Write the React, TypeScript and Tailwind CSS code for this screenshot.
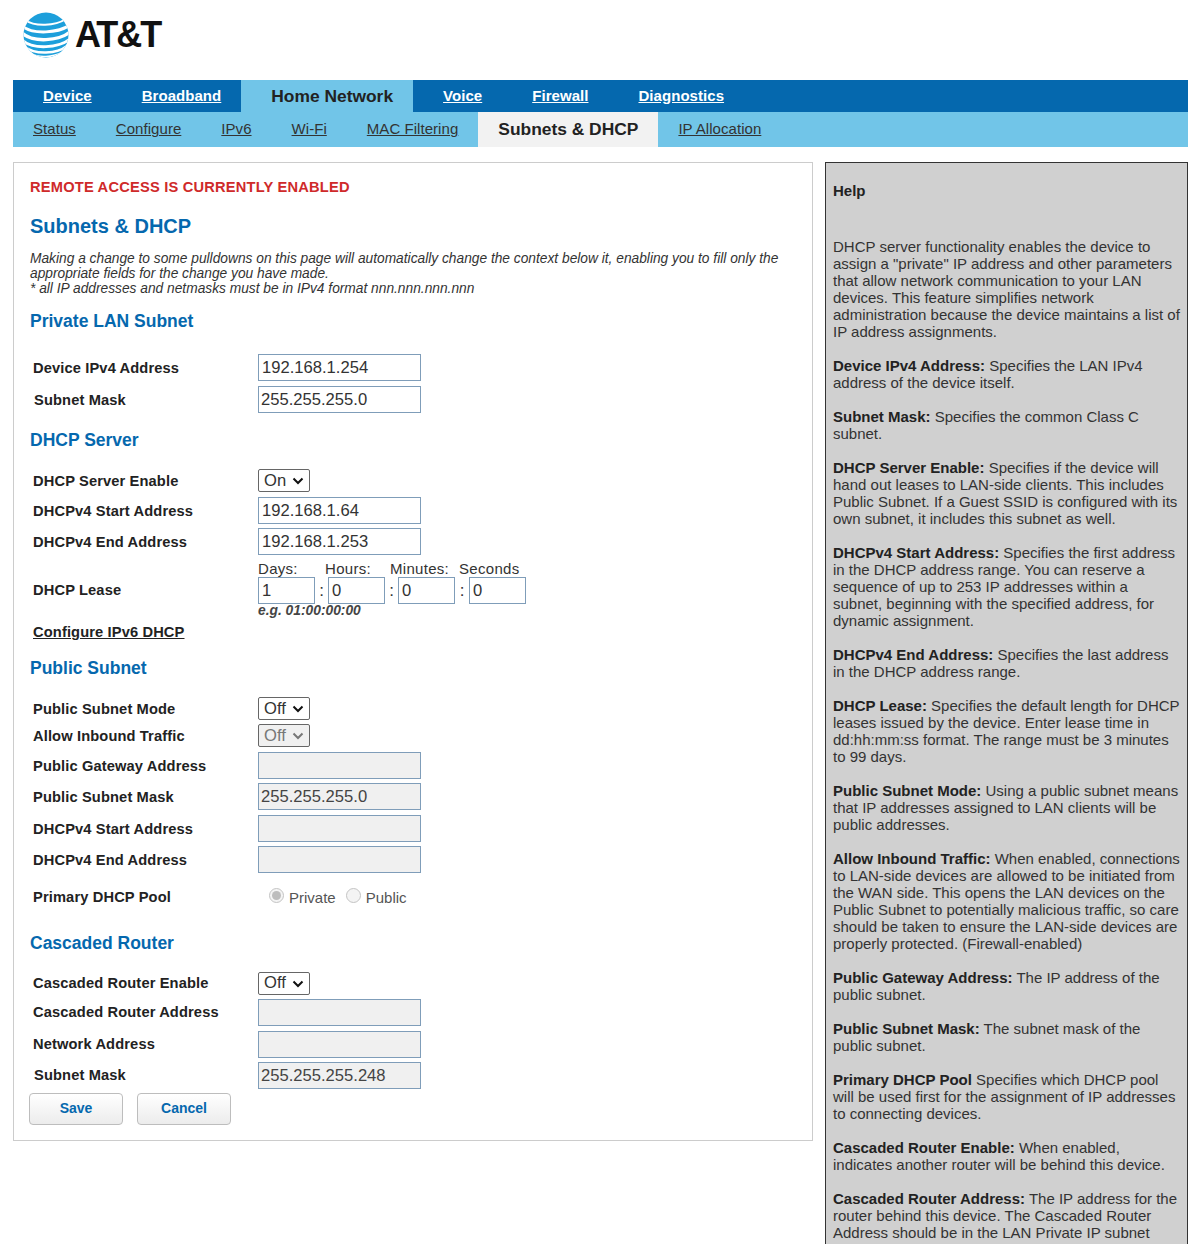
import { ReactNode } from 'react';

const font = 'font-["Liberation_Sans",Arial,sans-serif]';

const topTabs = [
  { label: 'Device' },
  { label: 'Broadband' },
  { label: 'Home Network', active: true },
  { label: 'Voice' },
  { label: 'Firewall' },
  { label: 'Diagnostics' },
];

const subTabs = [
  { label: 'Status' },
  { label: 'Configure' },
  { label: 'IPv6' },
  { label: 'Wi-Fi' },
  { label: 'MAC Filtering' },
  { label: 'Subnets & DHCP', active: true },
  { label: 'IP Allocation' },
];

const helpItems: { term?: string; text: string }[] = [
  { term: 'Device IPv4 Address:', text: 'Specifies the LAN IPv4 address of the device itself.' },
  { term: 'Subnet Mask:', text: 'Specifies the common Class C subnet.' },
  { term: 'DHCP Server Enable:', text: 'Specifies if the device will hand out leases to LAN-side clients. This includes Public Subnet. If a Guest SSID is configured with its own subnet, it includes this subnet as well.' },
  { term: 'DHCPv4 Start Address:', text: 'Specifies the first address in the DHCP address range. You can reserve a sequence of up to 253 IP addresses within a subnet, beginning with the specified address, for dynamic assignment.' },
  { term: 'DHCPv4 End Address:', text: 'Specifies the last address in the DHCP address range.' },
  { term: 'DHCP Lease:', text: 'Specifies the default length for DHCP leases issued by the device. Enter lease time in dd:hh:mm:ss format. The range must be 3 minutes to 99 days.' },
  { term: 'Public Subnet Mode:', text: 'Using a public subnet means that IP addresses assigned to LAN clients will be public addresses.' },
  { term: 'Allow Inbound Traffic:', text: 'When enabled, connections to LAN-side devices are allowed to be initiated from the WAN side. This opens the LAN devices on the Public Subnet to potentially malicious traffic, so care should be taken to ensure the LAN-side devices are properly protected. (Firewall-enabled)' },
  { term: 'Public Gateway Address:', text: 'The IP address of the public subnet.' },
  { term: 'Public Subnet Mask:', text: 'The subnet mask of the public subnet.' },
  { term: 'Primary DHCP Pool', text: 'Specifies which DHCP pool will be used first for the assignment of IP addresses to connecting devices.' },
  { term: 'Cascaded Router Enable:', text: 'When enabled, indicates another router will be behind this device.' },
  { term: 'Cascaded Router Address:', text: 'The IP address for the router behind this device. The Cascaded Router Address should be in the LAN Private IP subnet range.' },
];

const Globe = () => (
  <svg width="46" height="46" viewBox="0 0 46 46">
    <defs>
      <clipPath id="globe">
        <circle cx="23" cy="23" r="22.5" />
      </clipPath>
    </defs>
    <g clipPath="url(#globe)">
      <rect width="46" height="46" fill="#1d9fdb" />
      <g fill="none" stroke="#fff">
        <path d="M2 8C12 15 32 14 43 7" strokeWidth="2" />
        <path d="M-1 14C10 23 36 21 47 13" strokeWidth="3" />
        <path d="M-1 21C10 31 36 29 47 20" strokeWidth="3.4" />
        <path d="M-1 28C10 38 36 36 47 27" strokeWidth="3" />
        <path d="M2 35C12 43 34 42 44 34" strokeWidth="2.4" />
        <path d="M8 42C16 46 30 45 38 41" strokeWidth="1.4" />
      </g>
    </g>
  </svg>
);

const Chevron = ({ muted }: { muted?: boolean }) => (
  <svg width="12" height="8" viewBox="0 0 12 8" className="ml-1.5" fill="none">
    <path d="M1.5 1.5 6 6l4.5-4.5" stroke={muted ? '#777' : '#111'} strokeWidth="2" />
  </svg>
);

const Section = ({ children, className }: { children: ReactNode; className: string }) => (
  <h2 className={`text-[17.5px] leading-[22px] font-bold text-[#0568ae] ${className}`}>{children}</h2>
);

const Label = ({ children, nudge }: { children: ReactNode; nudge?: boolean }) => (
  <div className={`w-[228px] shrink-0 text-[14.67px] leading-[18px] font-bold text-[#222] tracking-[0.13px] ${nudge ? 'pl-[4px]' : 'pl-[3px]'}`}>
    {children}
  </div>
);

const Input = ({ value, disabled, tight, w = 'w-[163px]' }: { value?: string; disabled?: boolean; tight?: boolean; w?: string }) => (
  <div
    className={`${w} h-[27px] border border-[#7f9db9] text-[16.6px] leading-[25px] ${tight ? 'pl-[2px]' : 'pl-[3px]'} ${disabled ? 'bg-[#f0f0f0] text-[#444]' : 'bg-white text-[#333]'}`}
  >
    {value}
  </div>
);

const Select = ({ value, disabled }: { value: string; disabled?: boolean }) => (
  <div
    className={`w-[52px] h-[23px] flex items-center pl-[5px] pt-[1px] rounded-[2px] border text-[16.6px] ${disabled ? 'border-[#666] bg-[#f0f0f0] text-[#777]' : 'border-[#666] bg-white text-[#333]'}`}
  >
    {value}
    <Chevron muted={disabled} />
  </div>
);

const Radio = ({ checked }: { checked?: boolean }) => (
  <span className="w-[15px] h-[15px] -mt-[4px] rounded-full border border-[#c4c4c4] bg-[#f4f4f4] flex items-center justify-center">
    {checked && <span className="w-[9px] h-[9px] rounded-full bg-[#bdbdbd]" />}
  </span>
);

const Row = ({ label, nudge, children, className }: { label: ReactNode; nudge?: boolean; children: ReactNode; className: string }) => (
  <div className={`flex items-center ${className}`}>
    <Label nudge={nudge}>{label}</Label>
    {children}
  </div>
);

const Colon = ({ w = 'w-[13px]' }: { w?: string }) => <span className={`${w} text-center text-[17px] leading-[27px] text-[#333]`}>:</span>;

const Button = ({ children }: { children: ReactNode }) => (
  <div className="w-[94px] h-[32px] flex items-center justify-center rounded-[4px] border border-[#bdbdbd] bg-gradient-to-b from-white to-[#ececec] text-[14px] font-bold text-[#0568ae]">
    {children}
  </div>
);

export default function App() {
  return (
    <div className={`${font} h-[1244px] overflow-hidden bg-white pl-[13px] pr-[1px] text-[#333]`}>
      <header className="h-[80px] flex items-start pt-[12px] pl-[10px]">
        <Globe />
        <span className="ml-[6px] mt-[3px] text-[36px] leading-[40px] font-bold tracking-[-2px] text-[#111]">AT&amp;T</span>
      </header>

      <nav className="h-[32px] flex bg-[#0568ae]">
        {topTabs.map((t) =>
          t.active ? (
            <div key={t.label} className="pl-[30px] pr-[20px] flex items-center bg-[#71c5e8] text-[17.4px] font-bold text-[#222]">
              {t.label}
            </div>
          ) : (
            <a key={t.label} className="pl-[30px] pr-[20px] flex items-center text-[15px] font-bold tracking-[0.05px] text-white underline">
              {t.label}
            </a>
          ),
        )}
      </nav>
      <nav className="h-[35px] flex bg-[#71c5e8]">
        {subTabs.map((t) =>
          t.active ? (
            <div key={t.label} className="px-5 flex items-center bg-[#f2f2f2] text-[17.4px] font-bold text-[#222]">
              {t.label}
            </div>
          ) : (
            <a key={t.label} className="px-5 flex items-center text-[15px] tracking-[0.05px] text-[#333] underline">
              {t.label}
            </a>
          ),
        )}
      </nav>

      <div className="mt-[15px] flex items-start gap-[12px]">
        <main className="w-[800px] h-[979px] shrink-0 border border-[#cccccc] pl-[16px] pt-[15px]">
          <p className="text-[14.67px] leading-[18px] font-bold text-[#cf2a2a] tracking-[0.2px]">REMOTE ACCESS IS CURRENTLY ENABLED</p>
          <h1 className="mt-[18px] text-[20px] leading-[24px] font-bold text-[#0568ae]">Subnets &amp; DHCP</h1>
          <p className="mt-[13px] w-[760px] text-[13.75px] leading-[15px] italic text-[#333]">
            Making a change to some pulldowns on this page will automatically change the context below it, enabling you to fill only the appropriate fields for the change you have made.
            <br />* all IP addresses and netmasks must be in IPv4 format nnn.nnn.nnn.nnn
          </p>

          <Section className="mt-[14px]">Private LAN Subnet</Section>
          <Row label="Device IPv4 Address" className="mt-[22px]"><Input value="192.168.1.254" /></Row>
          <Row label="Subnet Mask" nudge className="mt-[5px]"><Input value="255.255.255.0" tight /></Row>

          <Section className="mt-[16px]">DHCP Server</Section>
          <Row label="DHCP Server Enable" className="mt-[18px]"><Select value="On" /></Row>
          <Row label="DHCPv4 Start Address" className="mt-[5px]"><Input value="192.168.1.64" /></Row>
          <Row label="DHCPv4 End Address" className="mt-[4px]"><Input value="192.168.1.253" /></Row>
          <div className="flex">
            <div className="w-[228px] shrink-0 pt-[26px]"><Label>DHCP Lease</Label></div>
            <div>
              <div className="mt-[6px] h-[16px] flex text-[15px] leading-[16px] tracking-[0.3px] text-[#333]">
                <span className="w-[67px]">Days:</span>
                <span className="w-[65px]">Hours:</span>
                <span className="w-[69px]">Minutes:</span>
                <span>Seconds</span>
              </div>
              <div className="flex">
                <Input value="1" w="w-[57px]" />
                <Colon />
                <Input value="0" w="w-[57px]" />
                <Colon />
                <Input value="0" w="w-[57px]" />
                <Colon w="w-[14px]" />
                <Input value="0" w="w-[57px]" />
              </div>
              <p className="h-[14px] text-[13.8px] leading-[14px] font-bold italic text-[#444]">e.g. 01:00:00:00</p>
            </div>
          </div>
          <div className="mt-[5px]"><Label><span className="underline">Configure IPv6 DHCP</span></Label></div>

          <Section className="mt-[16px]">Public Subnet</Section>
          <Row label="Public Subnet Mode" className="mt-[18px]"><Select value="Off" /></Row>
          <Row label="Allow Inbound Traffic" className="mt-[4px]"><Select value="Off" disabled /></Row>
          <Row label="Public Gateway Address" className="mt-[5px]"><Input disabled /></Row>
          <Row label="Public Subnet Mask" className="mt-[4px]"><Input value="255.255.255.0" disabled tight /></Row>
          <Row label="DHCPv4 Start Address" className="mt-[5px]"><Input disabled /></Row>
          <Row label="DHCPv4 End Address" className="mt-[4px]"><Input disabled /></Row>
          <Row label="Primary DHCP Pool" className="mt-[12px]">
            <div className="flex items-center pl-[11px] text-[15px] text-[#555]">
              <Radio checked />
              <span className="ml-[5px] mr-[10px] mt-[2px]">Private</span>
              <Radio />
              <span className="ml-[5px] mt-[2px]">Public</span>
            </div>
          </Row>

          <Section className="mt-[22px]">Cascaded Router</Section>
          <Row label="Cascaded Router Enable" className="mt-[18px]"><Select value="Off" /></Row>
          <Row label="Cascaded Router Address" className="mt-[4px]"><Input disabled /></Row>
          <Row label="Network Address" className="mt-[5px]"><Input disabled /></Row>
          <Row label="Subnet Mask" nudge className="mt-[4px]"><Input value="255.255.255.248" disabled tight /></Row>
          <div className="mt-[4px] -ml-[1px] flex gap-[14px]">
            <Button>Save</Button>
            <Button>Cancel</Button>
          </div>
        </main>

        <aside className="flex-1 h-[1200px] border border-[#333] bg-[#d0d0d0] pl-[7px] pr-[6px] pt-[19px] text-[15px] leading-[17px] text-[#333]">
          <h3 className="font-bold text-[#222]">Help</h3>
          <p className="mt-[39px]">
            DHCP server functionality enables the device to assign a "private" IP address and other parameters that allow network communication to your LAN devices. This feature simplifies network administration because the device maintains a list of IP address assignments.
          </p>
          {helpItems.map((item) => (
            <p key={item.term} className="mt-[17px]">
              <b className="text-[#222]">{item.term}</b> {item.text}
            </p>
          ))}
        </aside>
      </div>
    </div>
  );
}
